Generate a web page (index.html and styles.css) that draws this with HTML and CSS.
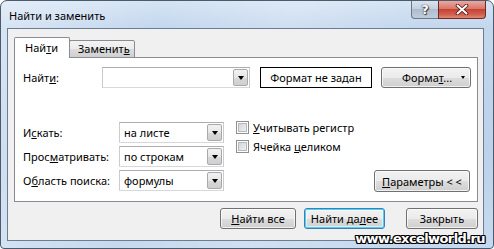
FILE: index.html
```html
<!DOCTYPE html>
<html lang="ru">
<head>
    <meta charset="UTF-8" />
    <title>Найти и заменить</title>
    <link rel="stylesheet" href="styles.css">
</head>
<body>
<div class="window">
    <div class="titlebar">
        <span class="title">Найти и заменить</span>
        <div class="caption-btns">
            <span class="cap cap-help">?</span>
            <span class="cap cap-close">
                <svg width="14" height="11" viewBox="0 0 14 11">
                    <path d="M2.5 1.5 L11.5 9.5 M11.5 1.5 L2.5 9.5" stroke="#4a1410" stroke-width="3.6" stroke-linecap="round" />
                    <path d="M2.5 1.5 L11.5 9.5 M11.5 1.5 L2.5 9.5" stroke="#fff" stroke-width="2" stroke-linecap="round" />
                </svg>
            </span>
        </div>
    </div>

    <div class="client">
        <div class="tabs">
            <div class="tab tab-active">Най<u>т</u>и</div>
            <div class="tab">Заменит<u>ь</u></div>
        </div>

        <div class="panel">
            <div class="row-find">
                <span class="lbl lbl-find">Найт<u>и</u>:</span>
                <div class="combo combo-find"><span class="combo-value"></span><span class="drop"></span></div>
                <div class="format-preview">Формат не задан</div>
                <div class="btn btn-format"><span>Форма<u>т</u>...</span><span class="arrow-small"></span></div>
            </div>

            <div class="options">
                <div class="opt-grid">
                    <span class="lbl">И<u>с</u>кать:</span>
                    <div class="combo"><span class="combo-value">на листе</span><span class="drop"></span></div>
                    <span class="lbl">Прос<u>м</u>атривать:</span>
                    <div class="combo"><span class="combo-value">по строкам</span><span class="drop"></span></div>
                    <span class="lbl">О<u>б</u>ласть поиска:</span>
                    <div class="combo"><span class="combo-value">формулы</span><span class="drop"></span></div>
                </div>

                <div class="checks">
                    <div class="check-row"><span class="checkbox"></span><span><u>У</u>читывать регистр</span></div>
                    <div class="check-row"><span class="checkbox"></span><span>Ячейка <u>ц</u>еликом</span></div>
                </div>

                <div class="btn btn-params"><u>П</u>араметры &lt; &lt;</div>
            </div>
        </div>

        <div class="actions">
            <div class="btn btn-all"><u>Н</u>айти все</div>
            <div class="btn btn-next">Найти да<u>л</u>ее</div>
            <div class="btn btn-close">Закрыть</div>
        </div>
    </div>

    <div class="watermark">www.excelworld.ru</div>
</div>
</body>
</html>
```

FILE: styles.css
```css
:root {
    --borda-janela: #4b5a6d;
    --borda-cliente: #6b7d93;
    --borda-aba: #898c95;
    --fundo-cliente: #f0f0f0;
    --borda-botao: #707070;
    --fundo-botao: linear-gradient(to bottom, #f2f2f2 0%, #ebebeb 50%, #dddddd 51%, #cfcfcf 100%);
}

html, body {
    margin: 0;
    padding: 0;
    background: #fff;
}

body {
    font-family: 'Noto Sans', Roboto, sans-serif;
    font-size: 11px;
    color: #000;
}

u {
    text-decoration: underline;
    text-underline-offset: 1px;
}

.window {
    position: relative;
    width: 494px;
    height: 249px;
    box-sizing: border-box;
    border: 1px solid var(--borda-janela);
    border-radius: 7px 7px 4px 4px;
    background:
        linear-gradient(100deg, rgba(255, 255, 255, 0.35) 0%, rgba(255, 255, 255, 0) 30%, rgba(255, 255, 255, 0.2) 55%, rgba(255, 255, 255, 0) 80%),
        linear-gradient(to bottom, #d5e4f4 0, #c3d7ed 27px, #bcd2ea 60%, #c6d9ee 100%);
    padding: 0 9px 7px 6px;
    display: flex;
    flex-direction: column;
}

.titlebar {
    height: 27px;
    display: flex;
    align-items: flex-start;
    flex-shrink: 0;
}

.title {
    margin: 7px 0 0 2px;
    line-height: 16px;
    font-size: 11px;
}

.caption-btns {
    margin-left: auto;
    margin-right: -2px;
    display: flex;
}

.cap {
    height: 18px;
    box-sizing: border-box;
    border: 1px solid #6a7889;
    border-top: none;
    display: flex;
    align-items: center;
    justify-content: center;
}

.cap-help {
    width: 27px;
    border-radius: 0 0 0 4px;
    border-right: none;
    background: linear-gradient(to bottom, #d9e3ee 0%, #c4d0de 45%, #aebcce 50%, #bfcddd 100%);
    color: #fff;
    font-family: 'DejaVu Sans', sans-serif;
    font-weight: bold;
    font-size: 13px;
    text-shadow: 0 0 1px #333, 0 0 1px #333, 1px 1px 1px #444;
}

.cap-close {
    width: 48px;
    border-radius: 0 0 4px 0;
    border-color: #6e2a24;
    background: linear-gradient(to bottom, #e9a99f 0%, #d9776a 45%, #c54334 50%, #d2604f 80%, #e08a73 100%);
}

.client {
    flex: 1;
    background: var(--fundo-cliente);
    border: 1px solid var(--borda-cliente);
    display: flex;
    flex-direction: column;
}

.tabs {
    display: flex;
    align-items: flex-end;
    height: 21px;
    margin: 8px 0 -1px 6px;
    position: relative;
    z-index: 1;
}

.tab {
    box-sizing: border-box;
    border: 1px solid var(--borda-aba);
    height: 18px;
    width: 66px;
    margin-left: -1px;
    padding-left: 8px;
    line-height: 16px;
    background: linear-gradient(to bottom, #f3f3f3 0%, #ebebeb 50%, #dddddd 51%, #cfcfcf 100%);
    border-radius: 2px 2px 0 0;
}

.tab-active {
    margin-left: 0;
    width: 56px;
    height: 21px;
    padding-left: 10px;
    line-height: 19px;
    border-bottom: none;
    background: #fff;
    position: relative;
    z-index: 2;
}

.panel {
    margin-left: 6px;
    width: 464px;
    height: 145px;
    box-sizing: border-box;
    border: 1px solid var(--borda-aba);
    background: #fff;
    padding: 9px 0 0 8px;
}

.row-find {
    display: flex;
    align-items: center;
    height: 21px;
}

.lbl {
    display: flex;
    align-items: center;
    white-space: nowrap;
}

.lbl-find {
    width: 79px;
}

.combo {
    box-sizing: border-box;
    height: 21px;
    border: 1px solid #abadb3;
    border-color: #abadb3 #c9ccd2 #d5d9de #c9ccd2;
    background: #fff;
    padding: 1px;
    display: flex;
    align-items: stretch;
}

.combo-find {
    width: 148px;
}

.combo-value {
    flex: 1;
    padding-left: 3px;
    line-height: 17px;
}

.drop {
    width: 15px;
    box-sizing: border-box;
    border: 1px solid #a9a9a9;
    border-radius: 2px;
    background: linear-gradient(to bottom, #f2f2f2 0%, #e6e6e6 50%, #d8d8d8 51%, #cfcfcf 100%);
    display: flex;
    align-items: center;
    justify-content: center;
}

.drop::after {
    content: "";
    border-left: 3.5px solid transparent;
    border-right: 3.5px solid transparent;
    border-top: 4px solid #000;
}

.format-preview {
    box-sizing: border-box;
    width: 112px;
    height: 21px;
    margin-left: 10px;
    border: 1px solid #000;
    background: #fff;
    text-align: center;
    line-height: 19px;
}

.btn {
    box-sizing: border-box;
    height: 21px;
    border: 1px solid var(--borda-botao);
    border-radius: 3px;
    background: var(--fundo-botao);
    box-shadow: inset 0 0 0 1px rgba(255, 255, 255, 0.7);
    display: flex;
    align-items: center;
    justify-content: center;
    white-space: nowrap;
}

.btn-format {
    width: 90px;
    margin-left: 9px;
    justify-content: flex-start;
    padding-left: 20px;
}

.arrow-small {
    margin-left: auto;
    margin-right: 5px;
    border-left: 2.5px solid transparent;
    border-right: 2.5px solid transparent;
    border-top: 3px solid #000;
}

.options {
    display: flex;
    margin-top: 34px;
}

.opt-grid {
    display: grid;
    grid-template-columns: 96px 105px;
    grid-auto-rows: 21px;
    row-gap: 3px;
}

.checks {
    margin: -1px 0 0 12px;
    display: flex;
    flex-direction: column;
    gap: 6px;
}

.check-row {
    display: flex;
    align-items: center;
    gap: 4px;
    height: 13px;
    white-space: nowrap;
}

.checkbox {
    width: 13px;
    height: 13px;
    box-sizing: border-box;
    border: 1px solid #8f8f8f;
    background: linear-gradient(135deg, #cbcfd5 0%, #f6f6f6 100%);
    box-shadow: inset 0 0 0 1px #fff, inset 0 0 0 2px #b4b9bf;
}

.btn-params {
    width: 96px;
    height: 22px;
    margin: 48px 7px 0 auto;
}

.actions {
    display: flex;
    justify-content: flex-end;
    margin-top: 6px;
    padding-right: 5px;
}

.btn-all {
    width: 76px;
}

.btn-next {
    width: 81px;
    margin-left: 8px;
    border-color: #3c7fb1;
    box-shadow: inset 0 0 0 1px #48d1fb, inset 0 0 0 2px rgba(255, 255, 255, 0.5);
}

.btn-close {
    width: 72px;
    margin-left: 21px;
}

.watermark {
    position: absolute;
    right: 8px;
    bottom: 2px;
    font-family: 'DejaVu Sans', sans-serif;
    font-weight: bold;
    font-size: 13px;
    letter-spacing: -0.6px;
    color: #fff;
    text-shadow:
        1px 0 0 #000, -1px 0 0 #000, 0 1px 0 #000, 0 -1px 0 #000,
        1px 1px 0 #000, -1px -1px 0 #000, 1px -1px 0 #000, -1px 1px 0 #000;
}
```
